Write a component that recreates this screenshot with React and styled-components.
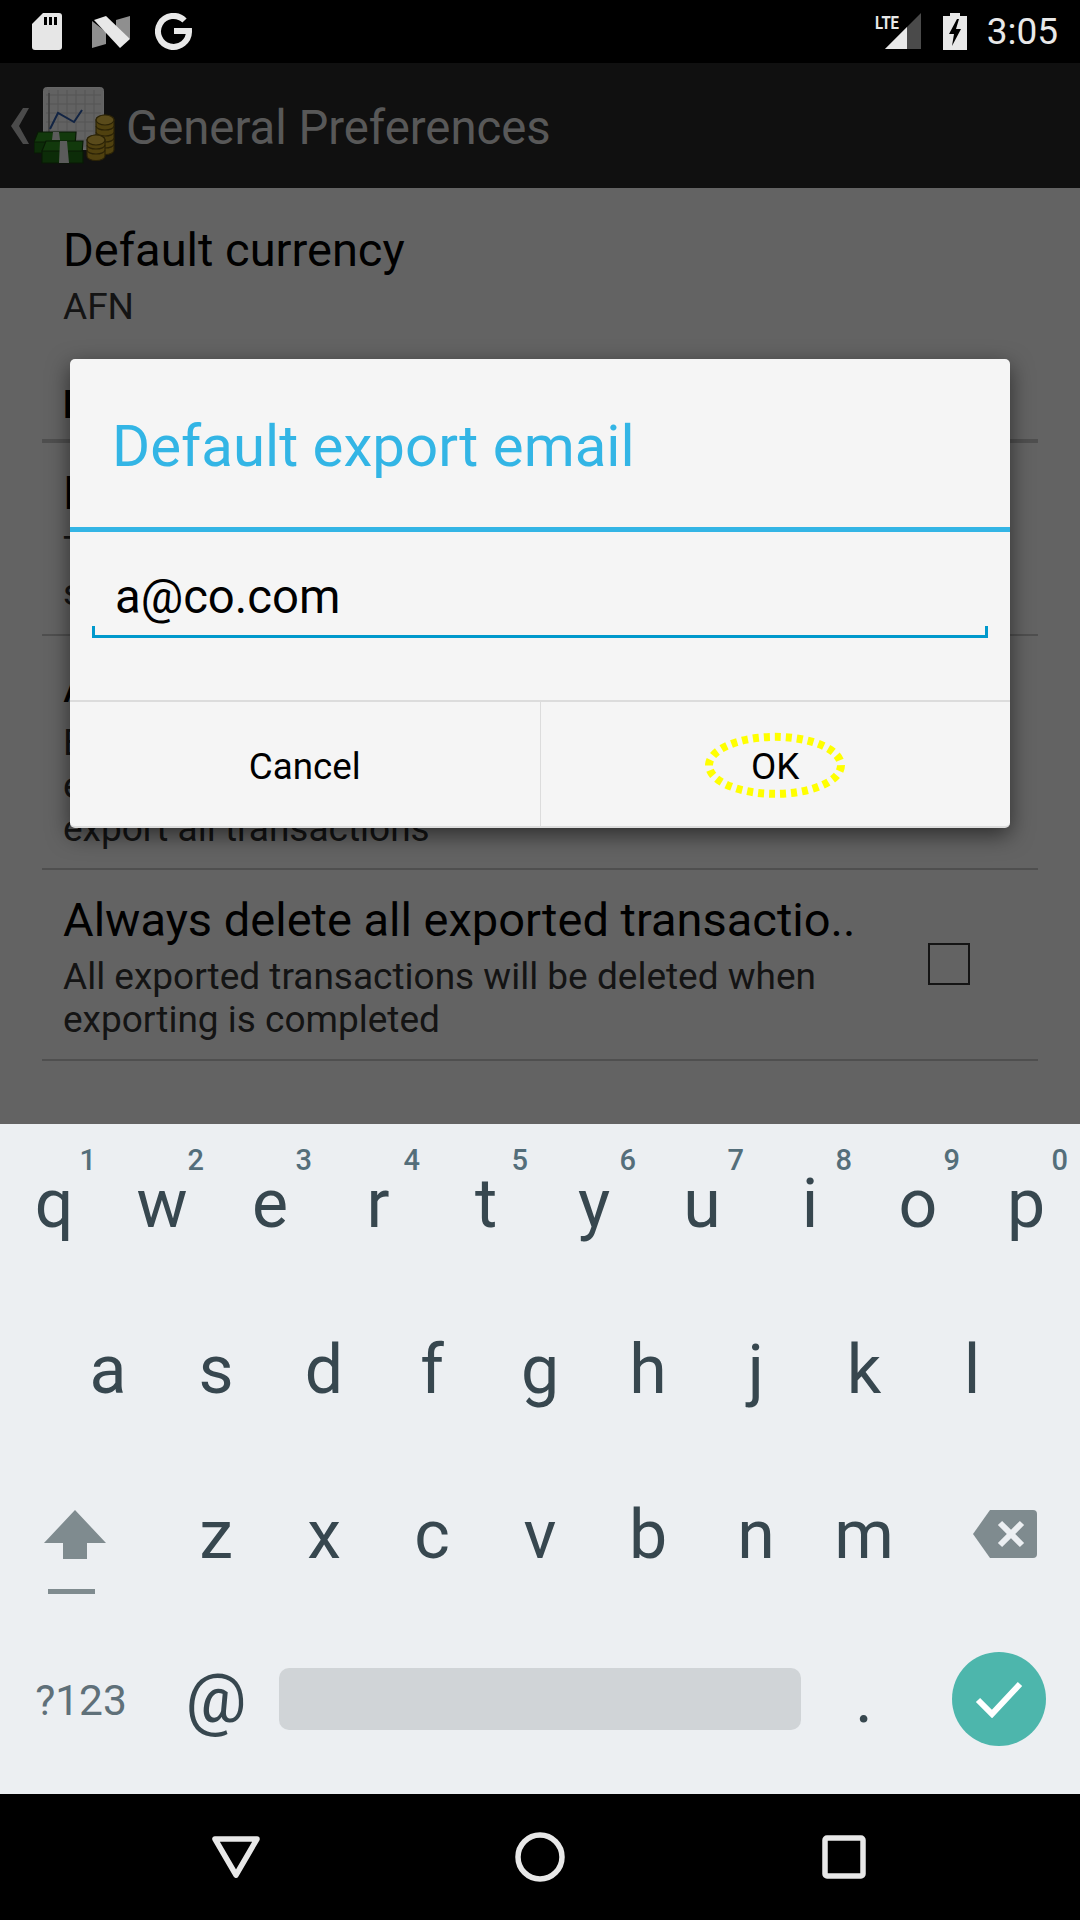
import React from "react";
import styled, { createGlobalStyle } from "styled-components";

const GlobalStyle = createGlobalStyle`
  html, body {
    margin: 0;
    padding: 0;
    background: #000;
  }
  * {
    box-sizing: border-box;
  }
`;

const Screen = styled.div`
  width: 1080px;
  height: 1920px;
  display: flex;
  flex-direction: column;
  font-family: Roboto, "Liberation Sans", sans-serif;
  overflow: hidden;
`;

const StatusBar = styled.div`
  height: 63px;
  background: #000;
  display: flex;
  align-items: center;
  justify-content: space-between;
  padding: 0 22px 0 32px;
`;

const StatusGroup = styled.div`
  display: flex;
  align-items: center;
  gap: ${(props) => props.$gap || 0}px;
  margin-left: ${(props) => props.$left || 0}px;
`;

const Clock = styled.span`
  color: #e8e8e8;
  font-size: 37px;
  line-height: 63px;
`;

const Activity = styled.div`
  position: relative;
  height: 1061px;
  display: flex;
  flex-direction: column;
  background: #f8f8f8;
`;

const ActionBar = styled.div`
  height: 125px;
  background: #282828;
  display: flex;
  align-items: center;
  padding-left: 11px;
`;

const ActionTitle = styled.h1`
  margin: 4px 0 0 11px;
  color: #dcdcdc;
  font-size: 47.25px;
  font-weight: 400;
`;

const PrefList = styled.div`
  padding: 0 42px;
`;

const PrefRow = styled.div`
  height: ${(props) => props.$height}px;
  display: flex;
  justify-content: space-between;
  align-items: flex-start;
  padding: ${(props) => props.$top || 19}px 0 0 21px;
  border-bottom: ${(props) => (props.$plain ? "none" : "2px solid #c6c6c6")};
`;

const PrefText = styled.div`
  width: 800px;
`;

const PrefTitle = styled.div`
  color: #000;
  font-size: 47px;
  line-height: 62px;
  white-space: nowrap;
`;

const PrefSummary = styled.div`
  color: #333;
  font-size: 37px;
  line-height: 43px;
  margin-top: 4px;
`;

const CheckBox = styled.div`
  width: 42px;
  height: 42px;
  border: 2px solid #333;
  margin: 54px 68px 0 0;
`;

const CategoryRow = styled.div`
  height: 82px;
  padding: 22px 0 0 21px;
  border-bottom: 4px solid #c6c6c6;
  color: #000;
  font-size: 38px;
  font-weight: 700;
  line-height: 44px;
`;

const Scrim = styled.div`
  position: absolute;
  inset: 0;
  background: rgba(0, 0, 0, 0.6);
  display: flex;
  align-items: center;
  justify-content: center;
`;

const Dialog = styled.div`
  width: 940px;
  height: 469px;
  background: #f5f5f5;
  border-radius: 5px;
  border-bottom: 2px solid #dcdcdc;
  box-shadow: 0 7px 22px rgba(0, 0, 0, 0.55);
  display: flex;
  flex-direction: column;
`;

const DialogTitle = styled.div`
  height: 173px;
  padding: 3px 0 0 42px;
  border-bottom: 5px solid #33b5e5;
  color: #33b5e5;
  font-size: 58.2px;
  line-height: 168px;
`;

const InputArea = styled.div`
  flex: 1;
  padding: 0 22px;
`;

const EmailInput = styled.div`
  position: relative;
  height: 106px;
  border-bottom: 3px solid #0099cc;
  padding: 37px 0 0 23px;
  color: #000;
  font-size: 47.25px;
  line-height: 56px;
  &::before,
  &::after {
    content: "";
    position: absolute;
    bottom: 0;
    width: 3px;
    height: 9px;
    background: #0099cc;
  }
  &::before {
    left: 0;
  }
  &::after {
    right: 0;
  }
`;

const ButtonBar = styled.div`
  height: 126px;
  display: flex;
  border-top: 2px solid #dcdcdc;
`;

const DialogButton = styled.div`
  position: relative;
  flex: 1;
  display: flex;
  align-items: center;
  justify-content: center;
  padding-top: 4px;
  color: #000;
  font-size: 36.75px;
  & + & {
    border-left: 1px solid #dcdcdc;
  }
`;

const FocusRing = styled.svg`
  position: absolute;
  left: 50%;
  top: 50%;
  transform: translate(-50%, -48%);
`;

const Keyboard = styled.div`
  height: 670px;
  background: #eceff2;
  display: grid;
  grid-auto-rows: 160px;
  row-gap: 5.5px;
`;

const KeyRow = styled.div`
  display: flex;
  align-items: center;
  margin-bottom: ${(props) => props.$trim || 0}px;
`;

const Key = styled.div`
  position: relative;
  width: ${(props) => props.$width || 108}px;
  height: 100%;
  display: flex;
  align-items: center;
  justify-content: center;
  flex-shrink: 0;
  color: #37474f;
  font-size: 68px;
  line-height: 1;
`;

const RowIndent = styled.div`
  width: 54px;
  flex-shrink: 0;
`;

const Hint = styled.span`
  position: absolute;
  top: 22px;
  right: 12px;
  color: #546e7a;
  font-size: 29px;
  font-weight: 500;
`;

const SymbolKey = styled(Key)`
  color: #5f7079;
  font-size: 42.5px;
  padding-top: 4px;
`;

const SpaceKey = styled.div`
  width: 522px;
  height: 62px;
  background: #d0d4d7;
  border-radius: 10px;
  margin: 0 9px;
`;

const ShiftGlyph = styled.svg`
  margin: 33px 12px 0 0;
`;

const BackspaceGlyph = styled.svg`
  margin: 0 0 3px 12px;
`;

const EnterButton = styled.div`
  width: 94px;
  height: 94px;
  border-radius: 50%;
  background: #4db6ac;
  display: flex;
  align-items: center;
  justify-content: center;
`;

const NavBar = styled.div`
  height: 126px;
  background: #000;
  display: flex;
  align-items: center;
  justify-content: center;
`;

const NavButton = styled.div`
  width: 304px;
  display: flex;
  justify-content: center;
`;

const rowOne = [
  ["q", 1],
  ["w", 2],
  ["e", 3],
  ["r", 4],
  ["t", 5],
  ["y", 6],
  ["u", 7],
  ["i", 8],
  ["o", 9],
  ["p", 0],
];
const rowTwo = ["a", "s", "d", "f", "g", "h", "j", "k", "l"];
const rowThree = ["z", "x", "c", "v", "b", "n", "m"];

const SdIcon = () => (
  <svg width="30" height="37" viewBox="0 0 30 37">
    <path
      d="M11 0H27a3 3 0 0 1 3 3V34a3 3 0 0 1-3 3H3a3 3 0 0 1-3-3V11Z"
      fill="#e6e6e6"
    />
    <path d="M12 4h3v8h-3zM17 4h3v8h-3zM22 4h3v8h-3z" fill="#000" />
  </svg>
);

const NougatIcon = () => (
  <svg width="43" height="32" viewBox="-5 0 43 32">
    <path d="M0 5L14 16V28L0 32Z" fill="#8f8f8f" />
    <path d="M38 0V23L24 17V4Z" fill="#8f8f8f" />
    <path d="M2 4L14 0L38 23L28 32Z" fill="#e8e8e8" />
  </svg>
);

const GoogleIcon = () => (
  <svg width="37" height="38" viewBox="0 0 37 38">
    <path
      d="M29.5 7.5A15.5 15.5 0 1 0 34 18H19"
      fill="none"
      stroke="#e8e8e8"
      strokeWidth="6"
    />
  </svg>
);

const SignalIcon = () => (
  <svg width="46" height="37" viewBox="0 0 46 37">
    <path d="M10 36L46 0V36Z" fill="#4a4a4a" />
    <path d="M10 36L32 14V36Z" fill="#e8e8e8" />
    <text
      x="0"
      y="16"
      fill="#e8e8e8"
      fontSize="18"
      fontWeight="700"
      fontFamily="Roboto"
      textLength="24"
      lengthAdjust="spacingAndGlyphs"
    >
      LTE
    </text>
  </svg>
);

const BatteryIcon = () => (
  <svg width="24" height="37" viewBox="0 0 24 37">
    <path d="M7 0H17V3H24V37H0V3H7Z" fill="#e8e8e8" />
    <path d="M14 6L6 21H11L9 33L18 16H13L16 6Z" fill="#000" />
  </svg>
);

const AppIcon = () => (
  <svg width="81" height="77" viewBox="0 0 81 77">
    <rect x="9.5" y="0.5" width="60" height="62" rx="3" fill="#f4f4f4" stroke="#fff" />
    <path
      d="M15 3V60M24 3V60M33 3V60M42 3V60M51 3V60M60 3V60M12 8H67M12 17H67M12 26H67M12 35H67M12 44H67M12 53H67"
      stroke="#d4d4d4"
      strokeWidth="1"
    />
    <path d="M15 6V46" stroke="#9a9a9a" strokeWidth="1.5" />
    <path d="M16 42L24 26L40 35L48 23" fill="none" stroke="#2d5aa8" strokeWidth="2" />
    <g fill="#c9a227" stroke="#6b5710" strokeWidth="1.2">
      <path d="M62 33a9 5 0 0 1 18 0V63a9 4.5 0 0 1-18 0Z" />
      <path d="M62 39a9 4 0 0 0 18 0M62 45a9 4 0 0 0 18 0M62 51a9 4 0 0 0 18 0M62 57a9 4 0 0 0 18 0" fill="none" />
      <ellipse cx="71" cy="33" rx="9" ry="5" fill="#e0bb44" />
      <path d="M53 53a9 5 0 0 1 18 0V69a9 4.5 0 0 1-18 0Z" />
      <path d="M53 58a9 4 0 0 0 18 0M53 63a9 4 0 0 0 18 0" fill="none" />
      <ellipse cx="62" cy="53" rx="9" ry="5" fill="#e0bb44" />
    </g>
    <g stroke="#143f0c" strokeWidth="1.2">
      <path d="M4 45H42L41 59H2L0 55Z" fill="#2f8f1f" />
      <path d="M0 55H40V66H0Z" fill="#1f6e14" />
      <path d="M12 54H49L48 67H10L8 64Z" fill="#2f8f1f" />
      <path d="M8 64H49V76H8Z" fill="#1f6e14" />
    </g>
    <path d="M19 45H25L26 53H18ZM26 54H33L35 76H25Z" fill="#e4e4e4" />
  </svg>
);

const Chevron = () => (
  <svg width="23" height="36" viewBox="0 0 23 36">
    <path d="M18 0H12L0 18L12 36H18L8 18Z" fill="#bcbcbc" />
  </svg>
);

const ShiftIcon = () => (
  <ShiftGlyph width="64" height="84" viewBox="0 0 64 84">
    <path d="M32 0L63 33H44V49H20V33H1Z" fill="#7f8b8f" />
    <rect x="5" y="79" width="47" height="5" fill="#7f8b8f" />
  </ShiftGlyph>
);

const BackspaceIcon = () => (
  <BackspaceGlyph width="64" height="48" viewBox="0 0 64 48">
    <path
      d="M17 0H60a4 4 0 0 1 4 4V44a4 4 0 0 1-4 4H17L0 24Z"
      fill="#7f8b8f"
    />
    <path d="M27 13L49 35M49 13L27 35" stroke="#eceff2" strokeWidth="6" />
  </BackspaceGlyph>
);

const CheckIcon = () => (
  <svg width="48" height="38" viewBox="0 0 48 38">
    <path d="M3 20L17 34L45 4" fill="none" stroke="#fff" strokeWidth="6" />
  </svg>
);

const BackIcon = () => (
  <svg width="50" height="44" viewBox="0 0 50 44">
    <path
      d="M4 4H46L25 40Z"
      fill="none"
      stroke="#e8e8e8"
      strokeWidth="5.5"
      strokeLinejoin="round"
    />
  </svg>
);

const HomeIcon = () => (
  <svg width="50" height="50" viewBox="0 0 50 50">
    <circle cx="25" cy="25" r="22" fill="none" stroke="#e8e8e8" strokeWidth="5.5" />
  </svg>
);

const RecentsIcon = () => (
  <svg width="44" height="44" viewBox="0 0 44 44">
    <rect x="3" y="3" width="38" height="38" rx="2" fill="none" stroke="#e8e8e8" strokeWidth="5.5" />
  </svg>
);

const App = () => {
  return (
    <Screen>
      <GlobalStyle />
      <StatusBar>
        <StatusGroup $gap={25}>
          <SdIcon />
          <NougatIcon />
          <GoogleIcon />
        </StatusGroup>
        <StatusGroup>
          <SignalIcon />
          <StatusGroup $gap={20} $left={22}>
            <BatteryIcon />
            <Clock>3:05</Clock>
          </StatusGroup>
        </StatusGroup>
      </StatusBar>

      <Activity>
        <ActionBar>
          <Chevron />
          <AppIcon />
          <ActionTitle>General Preferences</ActionTitle>
        </ActionBar>
        <PrefList>
          <PrefRow $height={173} $top={31} $plain>
            <PrefText>
              <PrefTitle>Default currency</PrefTitle>
              <PrefSummary>AFN</PrefSummary>
            </PrefText>
          </PrefRow>
          <CategoryRow>Exports</CategoryRow>
          <PrefRow $height={193}>
            <PrefText>
              <PrefTitle>Default export email</PrefTitle>
              <PrefSummary>
                The default email address that exports will be sent to. Can be
                changed when exporting
              </PrefSummary>
            </PrefText>
          </PrefRow>
          <PrefRow $height={234}>
            <PrefText>
              <PrefTitle>Always export all</PrefTitle>
              <PrefSummary>
                By default, only new transactions since last export will be
                exported. Check this option to export all transactions
              </PrefSummary>
            </PrefText>
          </PrefRow>
          <PrefRow $height={191}>
            <PrefText>
              <PrefTitle>Always delete all exported transactio..</PrefTitle>
              <PrefSummary>
                All exported transactions will be deleted when exporting is
                completed
              </PrefSummary>
            </PrefText>
            <CheckBox />
          </PrefRow>
        </PrefList>
        <Scrim>
          <Dialog>
            <DialogTitle>Default export email</DialogTitle>
            <InputArea>
              <EmailInput>a@co.com</EmailInput>
            </InputArea>
            <ButtonBar>
              <DialogButton>Cancel</DialogButton>
              <DialogButton>
                OK
                <FocusRing width="142" height="68" viewBox="0 0 142 68">
                  <ellipse
                    cx="71"
                    cy="34"
                    rx="66"
                    ry="28.5"
                    fill="none"
                    stroke="#ffff00"
                    strokeWidth="8"
                    strokeDasharray="6 5"
                  />
                </FocusRing>
              </DialogButton>
            </ButtonBar>
          </Dialog>
        </Scrim>
      </Activity>

      <Keyboard>
        <KeyRow>
          {rowOne.map(([letter, hint]) => (
            <Key key={letter}>
              {letter}
              <Hint>{hint}</Hint>
            </Key>
          ))}
        </KeyRow>
        <KeyRow>
          <RowIndent />
          {rowTwo.map((letter) => (
            <Key key={letter}>{letter}</Key>
          ))}
        </KeyRow>
        <KeyRow>
          <Key $width={162}>
            <ShiftIcon />
          </Key>
          {rowThree.map((letter) => (
            <Key key={letter}>{letter}</Key>
          ))}
          <Key $width={162}>
            <BackspaceIcon />
          </Key>
        </KeyRow>
        <KeyRow $trim={3}>
          <SymbolKey $width={162}>?123</SymbolKey>
          <Key>@</Key>
          <SpaceKey />
          <Key>.</Key>
          <Key $width={162}>
            <EnterButton>
              <CheckIcon />
            </EnterButton>
          </Key>
        </KeyRow>
      </Keyboard>

      <NavBar>
        <NavButton>
          <BackIcon />
        </NavButton>
        <NavButton>
          <HomeIcon />
        </NavButton>
        <NavButton>
          <RecentsIcon />
        </NavButton>
      </NavBar>
    </Screen>
  );
};

export default App;
